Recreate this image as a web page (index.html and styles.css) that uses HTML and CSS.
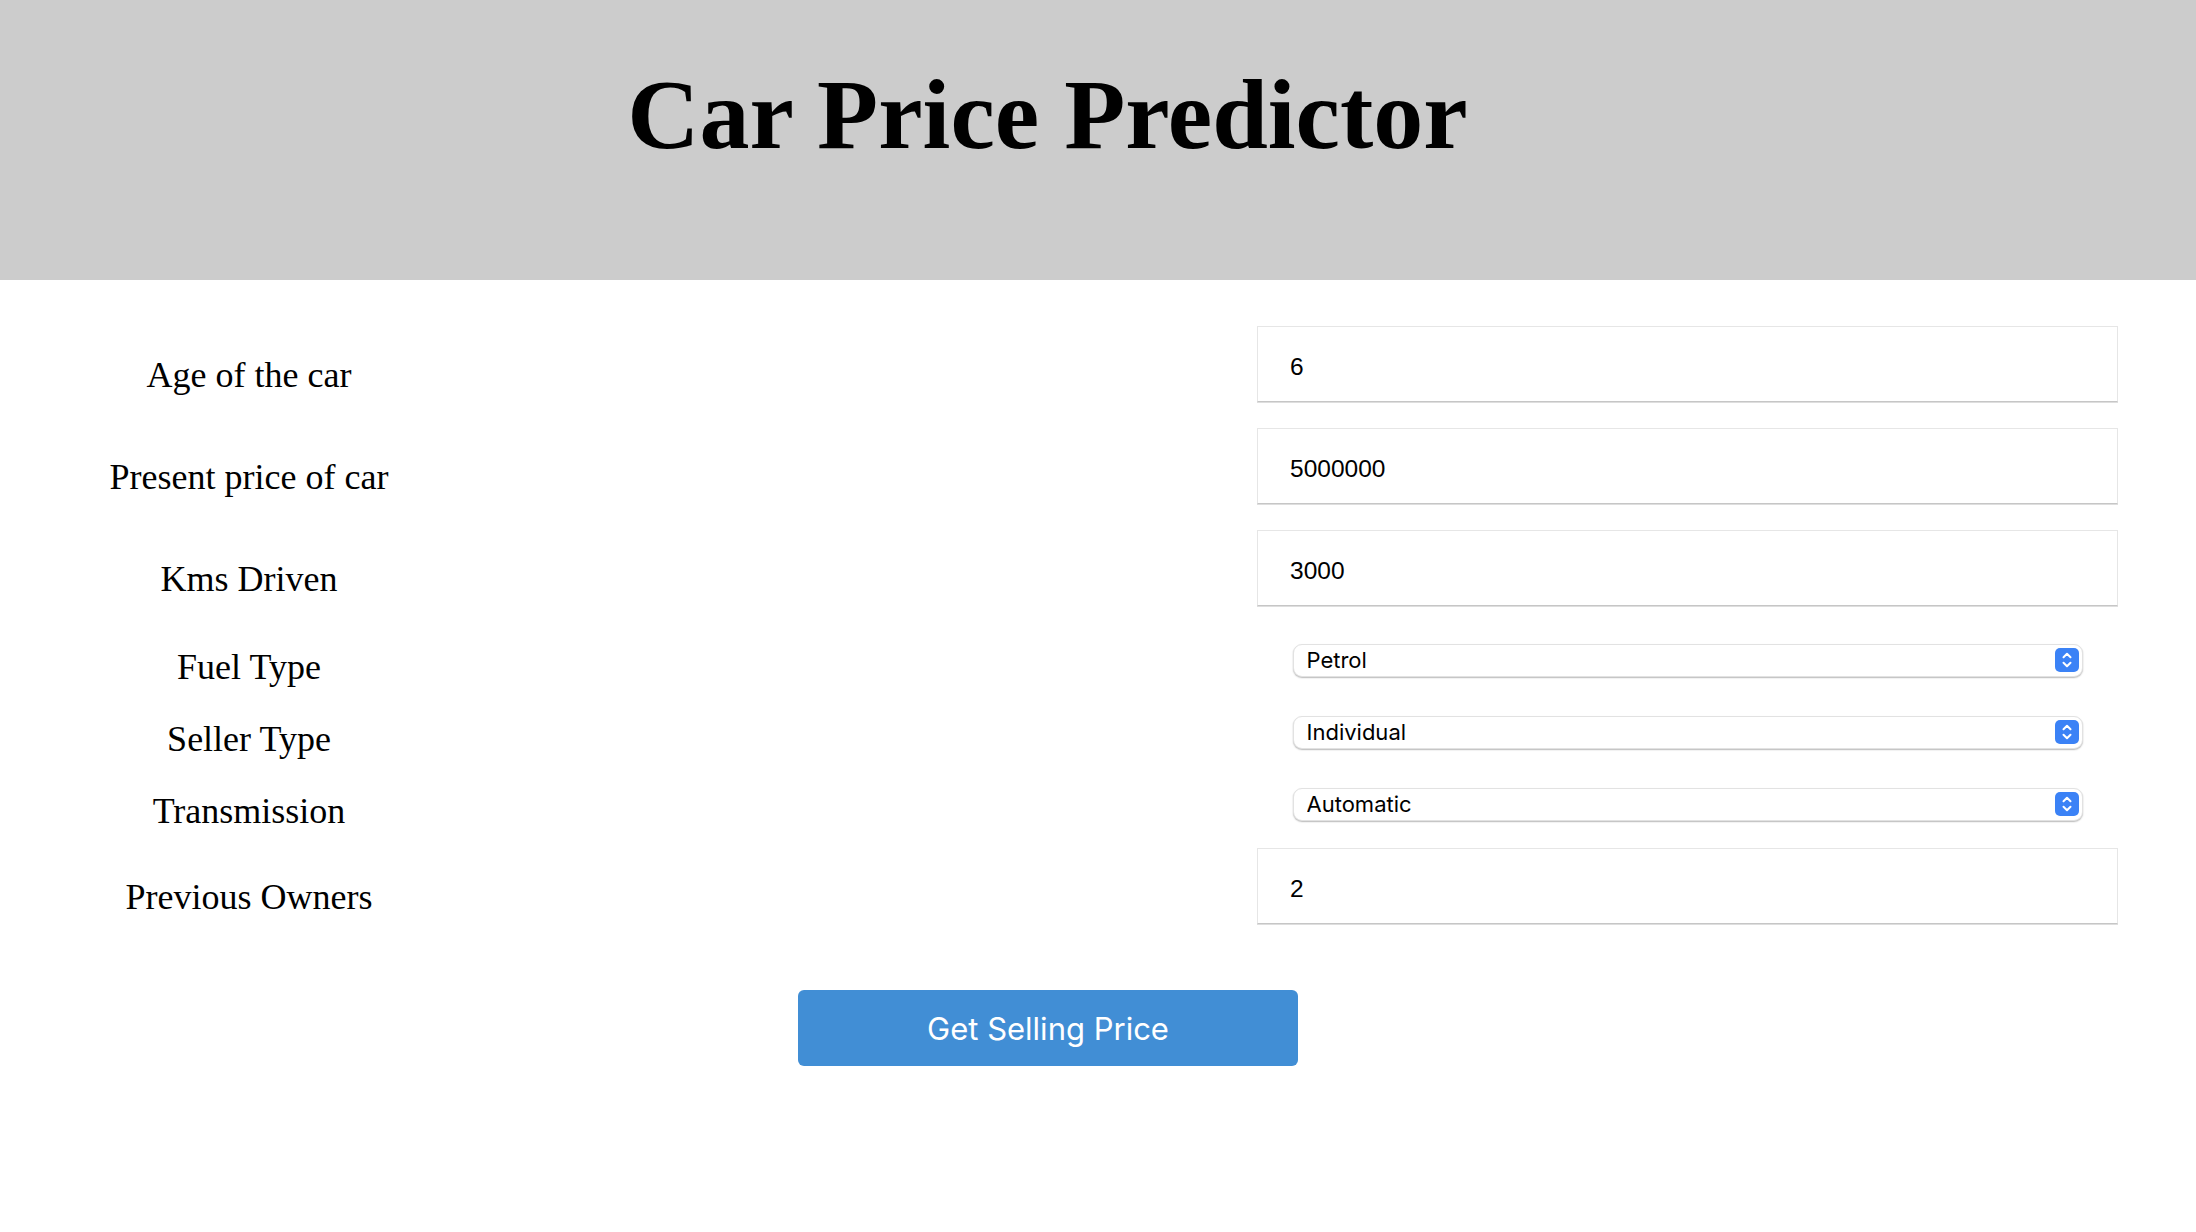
FILE: index.html
```html
<!DOCTYPE html>
<html lang="en">
<head>
<meta charset="utf-8">
<title>Car Price Predictor</title>
<link rel="stylesheet" href="styles.css">
</head>
<body>
<header class="header">
  <h1 class="title">Car Price Predictor</h1>
</header>
<main class="form">
  <div class="row row-input">
    <label class="label" for="age">Age of the car</label>
    <div class="field"><input class="text-input" id="age" type="text" value="6"></div>
  </div>
  <div class="row row-input">
    <label class="label" for="price">Present price of car</label>
    <div class="field"><input class="text-input" id="price" type="text" value="5000000"></div>
  </div>
  <div class="row row-input">
    <label class="label" for="kms">Kms Driven</label>
    <div class="field"><input class="text-input" id="kms" type="text" value="3000"></div>
  </div>
  <div class="row row-select">
    <label class="label" for="fuel">Fuel Type</label>
    <div class="field">
      <div class="select-wrap">
        <select class="select" id="fuel"><option>Petrol</option><option>Diesel</option><option>CNG</option></select>
        <svg class="stepper" viewBox="0 0 24 24" width="24" height="24" aria-hidden="true"><rect width="24" height="24" rx="5" fill="#3b82f6"/><path d="M8.5 9.2 12 5.8 15.5 9.2M8.5 14.8 12 18.2 15.5 14.8" fill="none" stroke="#fff" stroke-width="2" stroke-linecap="round" stroke-linejoin="round"/></svg>
      </div>
    </div>
  </div>
  <div class="row row-select">
    <label class="label" for="seller">Seller Type</label>
    <div class="field">
      <div class="select-wrap">
        <select class="select" id="seller"><option>Individual</option><option>Dealer</option></select>
        <svg class="stepper" viewBox="0 0 24 24" width="24" height="24" aria-hidden="true"><rect width="24" height="24" rx="5" fill="#3b82f6"/><path d="M8.5 9.2 12 5.8 15.5 9.2M8.5 14.8 12 18.2 15.5 14.8" fill="none" stroke="#fff" stroke-width="2" stroke-linecap="round" stroke-linejoin="round"/></svg>
      </div>
    </div>
  </div>
  <div class="row row-select">
    <label class="label" for="trans">Transmission</label>
    <div class="field">
      <div class="select-wrap">
        <select class="select" id="trans"><option>Automatic</option><option>Manual</option></select>
        <svg class="stepper" viewBox="0 0 24 24" width="24" height="24" aria-hidden="true"><rect width="24" height="24" rx="5" fill="#3b82f6"/><path d="M8.5 9.2 12 5.8 15.5 9.2M8.5 14.8 12 18.2 15.5 14.8" fill="none" stroke="#fff" stroke-width="2" stroke-linecap="round" stroke-linejoin="round"/></svg>
      </div>
    </div>
  </div>
  <div class="row row-input">
    <label class="label" for="owners">Previous Owners</label>
    <div class="field"><input class="text-input" id="owners" type="text" value="2"></div>
  </div>
  <div class="actions">
    <button class="submit" type="button">Get Selling Price</button>
  </div>
</main>
</body>
</html>
```

FILE: styles.css
```css
html, body {
  margin: 0;
  padding: 0;
  background: #ffffff;
}

body {
  font-family: "Liberation Serif", "Times New Roman", serif;
  color: #000000;
}

.header {
  box-sizing: border-box;
  height: 280px;
  background: #cccccc;
  padding: 58px 101px 0 0;
  text-align: center;
}

.title {
  margin: 0;
  font-family: "Liberation Serif", "Times New Roman", serif;
  font-weight: bold;
  font-size: 100px;
  line-height: 114px;
  color: #000000;
}

.form {
  display: flex;
  flex-direction: column;
  padding-top: 46px;
}

.row {
  display: grid;
  grid-template-columns: 498px 1fr 861px;
  align-items: center;
  width: 2118px;
}

.row-input {
  height: 76px;
}

.row-select {
  height: 72px;
}

.row-input + .row-input {
  margin-top: 26px;
}

.row-input + .row-select {
  margin-top: 18px;
}

.row-select + .row-input {
  margin-top: 8px;
}

.label {
  display: block;
  grid-column: 1;
  text-align: center;
  font-size: 36px;
  line-height: 41px;
}

.row-input .label {
  margin-top: 22px;
}

.row-select .label {
  margin-top: 14px;
}

.field {
  grid-column: 3;
  display: flex;
  justify-content: center;
}

.text-input {
  box-sizing: border-box;
  width: 861px;
  height: 76px;
  margin: 0;
  padding: 5px 20px 0 32px;
  border: 1px solid #e6e6e6;
  border-bottom: 1px solid #c6c6c6;
  border-radius: 0;
  box-shadow: 0 1px 0 #dedede;
  background: #ffffff;
  font-family: "Liberation Sans", Arial, sans-serif;
  font-size: 24.5px;
  color: #000000;
  outline: none;
}

.select-wrap {
  position: relative;
  width: 790px;
  height: 33px;
}

.select {
  -webkit-appearance: none;
  appearance: none;
  box-sizing: border-box;
  width: 790px;
  height: 33px;
  margin: 0;
  padding: 0 40px 0 13px;
  border: 1px solid #e2e2e2;
  border-radius: 9px;
  box-shadow: 0 1px 1.5px rgba(0, 0, 0, 0.28);
  background: #ffffff;
  font-family: Inter, "Liberation Sans", sans-serif;
  font-size: 22px;
  color: #000000;
  outline: none;
}

.stepper {
  position: absolute;
  right: 4px;
  top: 4.5px;
  pointer-events: none;
}

.actions {
  display: flex;
  justify-content: center;
  padding-right: 100px;
  margin-top: 66px;
}

.submit {
  box-sizing: border-box;
  width: 500px;
  height: 76px;
  margin: 0;
  padding: 0;
  border: none;
  border-radius: 6px;
  background: #418ed5;
  color: #ffffff;
  font-family: Inter, "Liberation Sans", sans-serif;
  font-size: 31px;
  font-weight: 400;
  cursor: pointer;
}
```
